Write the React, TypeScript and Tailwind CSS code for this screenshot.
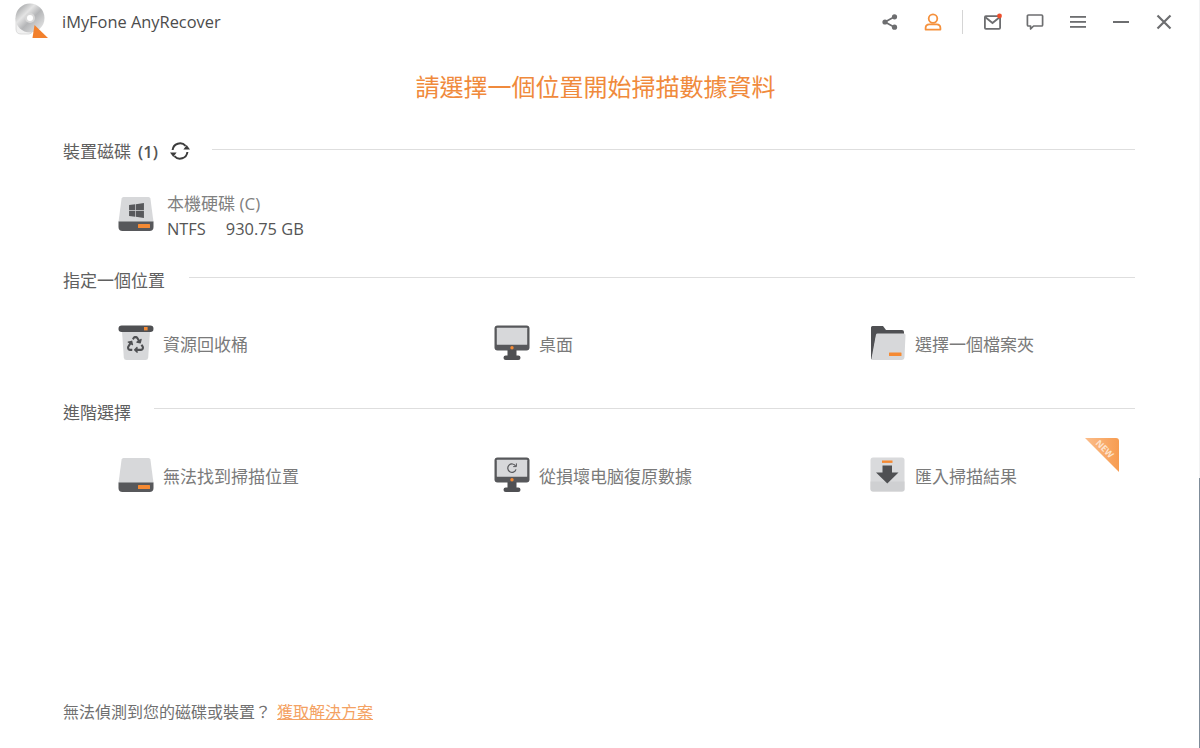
import React from 'react';
import { FaRecycle, FaWindows } from 'react-icons/fa';

const Logo = () => (
    <svg width="36" height="40" viewBox="0 0 36 40" className="-mt-[4px]">
        <defs>
            <linearGradient id="disc" x1="0" y1="0" x2="1" y2="1">
                <stop offset="0" stopColor="#8d8f91" />
                <stop offset="0.35" stopColor="#e4e4e4" />
                <stop offset="0.55" stopColor="#b4b5b7" />
                <stop offset="1" stopColor="#efefef" />
            </linearGradient>
        </defs>
        <path d="M1 18 V29 Q1 34 6 34 H14 Q17 34 17 31 V28 Z" fill="#f1f1f1" stroke="#d4d4d4" strokeWidth="0.8" />
        <circle cx="15" cy="18" r="14.5" fill="url(#disc)" />
        <circle cx="15" cy="18" r="5" fill="#d8d8d8" />
        <circle cx="15" cy="18" r="3" fill="#ffffff" />
        <path d="M19.5 25 L33 38 H17.5 Z" fill="#f2802c" />
    </svg>
);

const ShareIcon = () => (
    <svg width="18" height="18" viewBox="0 0 18 18" fill="#6d6e70">
        <circle cx="13.5" cy="3.8" r="2.6" />
        <circle cx="4" cy="9" r="2.6" />
        <circle cx="13.5" cy="14.2" r="2.6" />
        <path d="M4 9 L13.5 3.8 M4 9 L13.5 14.2" stroke="#6d6e70" strokeWidth="1.8" />
    </svg>
);

const UserIcon = () => (
    <svg width="18" height="18" viewBox="0 0 18 18" fill="none" stroke="#f5913d" strokeWidth="1.8">
        <circle cx="9" cy="5.6" r="4.3" />
        <path d="M1.6 16.6 V15 Q1.6 11.4 5.4 11.4 H12.6 Q16.4 11.4 16.4 15 V16.6 Z" strokeLinejoin="round" />
    </svg>
);

const MailIcon = () => (
    <svg width="20" height="18" viewBox="0 0 20 18" fill="none">
        <rect x="1.9" y="3.2" width="15.2" height="12.6" rx="1" stroke="#6d6e70" strokeWidth="1.8" />
        <path d="M2.4 4.2 L9.5 10 L16.6 4.2" stroke="#6d6e70" strokeWidth="1.8" />
        <circle cx="16.5" cy="3" r="2.4" fill="#ee4e2b" />
    </svg>
);

const ChatIcon = () => (
    <svg width="18" height="18" viewBox="0 0 18 18" fill="none" stroke="#6d6e70" strokeWidth="1.7" strokeLinejoin="round">
        <path d="M2.5 2 H15.5 Q16.6 2 16.6 3.1 V11.9 Q16.6 13 15.5 13 H7.6 L4.6 16 V13 H2.5 Q1.4 13 1.4 11.9 V3.1 Q1.4 2 2.5 2 Z" />
    </svg>
);

const MenuIcon = () => (
    <svg width="16" height="14" viewBox="0 0 16 14" fill="#6d6e70">
        <rect y="1" width="16" height="1.8" />
        <rect y="6" width="16" height="1.8" />
        <rect y="11" width="16" height="1.8" />
    </svg>
);

const MinIcon = () => (
    <svg width="16" height="14" viewBox="0 0 16 14" fill="#6d6e70">
        <rect y="6" width="16" height="2" />
    </svg>
);

const CloseIcon = () => (
    <svg width="16" height="16" viewBox="0 0 16 16" stroke="#6d6e70" strokeWidth="2.2">
        <path d="M1.5 1.5 L14.5 14.5 M14.5 1.5 L1.5 14.5" />
    </svg>
);

const RefreshIcon = () => (
    <svg width="20" height="20" viewBox="0 0 20 20" fill="none">
        <path d="M2.6 9 A7.5 7.5 0 0 1 15.6 4.8" stroke="#3c3c3c" strokeWidth="2" />
        <path d="M17.4 11 A7.5 7.5 0 0 1 4.4 15.2" stroke="#3c3c3c" strokeWidth="2" />
        <path d="M13.4 8.6 H20 L16.7 4 Z" fill="#3c3c3c" />
        <path d="M0 11.4 H6.6 L3.3 16 Z" fill="#3c3c3c" />
    </svg>
);

const DriveIcon = ({ children }: { children?: React.ReactNode }) => (
    <div className="relative w-[36px] h-[36px] shrink-0">
        <svg width="36" height="36" viewBox="0 0 36 36">
            <path d="M5.5 1 H30.5 Q32 1 32.4 2.6 L35.5 26 H0.5 L3.6 2.6 Q4 1 5.5 1 Z" fill="#d7d8da" />
            <path d="M0.5 25.5 H35.5 V31 Q35.5 35 31.5 35 H4.5 Q0.5 35 0.5 31 Z" fill="#57585b" />
            <rect x="20" y="28" width="12" height="4" rx="0.5" fill="#f58a33" />
        </svg>
        {children}
    </div>
);

const TrashIcon = () => (
    <svg width="36" height="36" viewBox="0 0 36 36" className="shrink-0">
        <path d="M4 6 H32 L30.2 32.5 Q30 35 27.5 35 H8.5 Q6 35 5.8 32.5 Z" fill="#d7d8da" />
        <rect x="0.5" y="0.5" width="35" height="6.5" rx="3.2" fill="#4f5053" />
        <rect x="26" y="2" width="3.6" height="3.4" fill="#f58a33" />
    </svg>
);

const MonitorIcon = ({ reload }: { reload?: boolean }) => (
    <svg width="36" height="36" viewBox="0 0 36 36" className="shrink-0">
        <rect x="0.5" y="0.5" width="35" height="25" rx="3" fill="#57585b" />
        <rect x="2.8" y="2.8" width="30.4" height="17" rx="0.5" fill="#d7d8da" />
        <circle cx="18" cy="22.8" r="1.7" fill="#f58a33" />
        <rect x="13.5" y="25" width="9" height="6" fill="#4f5053" />
        <rect x="9.5" y="30.5" width="17" height="4.5" rx="2.2" fill="#4f5053" />
        {reload && (
            <g fill="none" stroke="#57585b" strokeWidth="1.2">
                <path d="M21.6 9 A4.2 4.2 0 1 0 22 12.4" />
                <path d="M22.4 6.4 V9.6 H19.2" strokeWidth="1" />
            </g>
        )}
    </svg>
);

const FolderIcon = () => (
    <svg width="36" height="36" viewBox="0 0 36 36" className="shrink-0">
        <path d="M1 2.5 Q1 1 2.5 1 H13 L16 5 H32 Q34 5 34 7 V12 H6 L2 34 H1 Z" fill="#4f5053" />
        <path d="M6 9.5 Q6.3 8.5 7.5 8.5 H34 Q35.5 8.5 35.5 10 L34.5 32 Q34.4 35 31.5 35 H1.2 Z" fill="#d7d8da" />
        <rect x="19" y="27.5" width="12.5" height="3.6" rx="0.5" fill="#f58a33" />
    </svg>
);

const ImportIcon = () => (
    <svg width="36" height="36" viewBox="0 0 36 36" className="shrink-0">
        <rect x="0.5" y="0.5" width="34" height="34" rx="2.5" fill="#d9dadc" />
        <path d="M0.5 24.5 H34.5 V32 Q34.5 34.5 32 34.5 H3 Q0.5 34.5 0.5 32 Z" fill="#cfd0d2" />
        <rect x="12" y="3.5" width="10.5" height="2.4" fill="#f58a33" />
        <path d="M12.5 8.5 H22 V15.5 H28.5 L17.3 26.5 L6 15.5 H12.5 Z" fill="#4f5053" />
    </svg>
);

const SectionHeader = ({ title, icon, lineClass }: { title: React.ReactNode; icon?: React.ReactNode; lineClass: string }) => (
    <div className="flex items-center h-[24px] pr-[65px] pl-[63px]">
        <span className="text-[17px] text-[#606060] whitespace-nowrap pt-[2px]">{title}</span>
        {icon}
        <div className={`flex-1 h-px bg-[#dedede] ${lineClass}`} />
    </div>
);

const Item = ({ icon, label, children }: { icon: React.ReactNode; label: string; children?: React.ReactNode }) => (
    <div className="relative flex items-center h-[38px] gap-[9px]">
        {icon}
        <span className="text-[17px] text-[#7a7a7a] whitespace-nowrap pt-[4px]">{label}</span>
        {children}
    </div>
);

export default function App() {
    return (
        <div className="relative flex flex-col w-[1200px] h-[748px] overflow-hidden bg-white font-['Open_Sans','Noto_Sans_CJK_TC',sans-serif]">
            {/* title bar */}
            <div className="flex items-center justify-between h-[43px] pl-[15px] pr-[15px]">
                <div className="flex items-center gap-[11px]">
                    <Logo />
                    <span className="text-[16.4px] text-[#4c4c4c] whitespace-nowrap mt-[1px]">iMyFone AnyRecover</span>
                </div>
                <div className="flex items-center">
                    <div className="flex justify-center w-[43px]"><ShareIcon /></div>
                    <div className="flex justify-center w-[43px]"><UserIcon /></div>
                    <div className="w-px h-[24px] bg-[#d5d5d5] mx-[8px]" />
                    <div className="flex justify-center w-[43px]"><MailIcon /></div>
                    <div className="flex justify-center w-[43px] ml-[-1px]"><ChatIcon /></div>
                    <div className="flex justify-center w-[43px]"><MenuIcon /></div>
                    <div className="flex justify-center w-[43px]"><MinIcon /></div>
                    <div className="flex justify-center w-[43px]"><CloseIcon /></div>
                </div>
            </div>

            <h1 className="mt-[27px] h-[34px] pr-[9px] text-center text-[24px] leading-[34px] font-normal text-[#f08a3c]">
                請選擇一個位置開始掃描數據資料
            </h1>

            <div className="mt-[35px]">
                <SectionHeader
                    title={<>裝置磁碟<span className="ml-[7px] text-[#555555] text-[16.5px] font-semibold">(1)</span></>}
                    icon={<div className="ml-[12px] mr-[22px]"><RefreshIcon /></div>}
                    lineClass="-mt-[3px]"
                />
            </div>
            <div className="flex items-center gap-[13px] h-[38px] mt-[32px] pl-[118px]">
                <DriveIcon>
                    <FaWindows className="absolute left-[10px] top-[6px] text-[#57585b]" size={17} />
                </DriveIcon>
                <div className="flex flex-col leading-[25px] mt-[3px]">
                    <span className="text-[17px] text-[#808080] whitespace-nowrap">本機硬碟 (C)</span>
                    <span className="text-[16.4px] text-[#555555] whitespace-nowrap">NTFS<span className="ml-[20px]">930.75 GB</span></span>
                </div>
            </div>

            <div className="mt-[35px]">
                <SectionHeader title="指定一個位置" lineClass="ml-[24px] -mt-[6px]" />
            </div>
            <div className="grid grid-cols-[376px_376px_1fr] mt-[32px] pl-[118px] pr-[65px]">
                <Item icon={<div className="relative w-[36px] h-[36px] shrink-0"><TrashIcon /><FaRecycle className="absolute left-[9px] top-[11px] text-[#4f5053]" size={17} /></div>} label="資源回收桶" />
                <Item icon={<MonitorIcon />} label="桌面" />
                <Item icon={<FolderIcon />} label="選擇一個檔案夾" />
            </div>

            <div className="mt-[38px]">
                <SectionHeader title="進階選擇" lineClass="ml-[23px] -mt-[7px]" />
            </div>
            <div className="grid grid-cols-[376px_376px_1fr] mt-[32px] pl-[118px] pr-[65px]">
                <Item icon={<DriveIcon />} label="無法找到掃描位置" />
                <Item icon={<MonitorIcon reload />} label="從損壞电脑復原數據" />
                <Item icon={<ImportIcon />} label="匯入掃描結果">
                    {/* corner ribbon */}
                    <div className="absolute right-[16px] top-[-18px] w-[34px] h-[34px] overflow-hidden">
                        <svg width="34" height="34" viewBox="0 0 34 34" className="absolute inset-0">
                            <defs>
                                <linearGradient id="ribbon" x1="0" y1="0" x2="1" y2="0">
                                    <stop offset="0" stopColor="#fbbd8b" />
                                    <stop offset="1" stopColor="#f79c50" />
                                </linearGradient>
                            </defs>
                            <path d="M0 0 H31 Q34 0 34 3 V34 Z" fill="url(#ribbon)" />
                        </svg>
                        <span className="absolute left-[9px] top-[6px] rotate-45 text-[9px] leading-[10px] font-bold text-[#fde3cd]">NEW</span>
                    </div>
                </Item>
            </div>

            <div className="flex items-center mt-auto mb-[24px] h-[24px] pl-[63px] text-[16px]">
                <span className="text-[#707070] whitespace-nowrap">無法偵測到您的磁碟或裝置？</span>
                <a className="ml-[6px] text-[#f4a263] underline whitespace-nowrap">獲取解決方案</a>
            </div>

            {/* window edge */}
            <div className="absolute right-0 top-0 bottom-0 w-px flex flex-col">
                <div className="h-[478px] bg-[#f1f2f3]" />
                <div className="flex-1 bg-[#7f8c99]" />
            </div>
        </div>
    );
}
